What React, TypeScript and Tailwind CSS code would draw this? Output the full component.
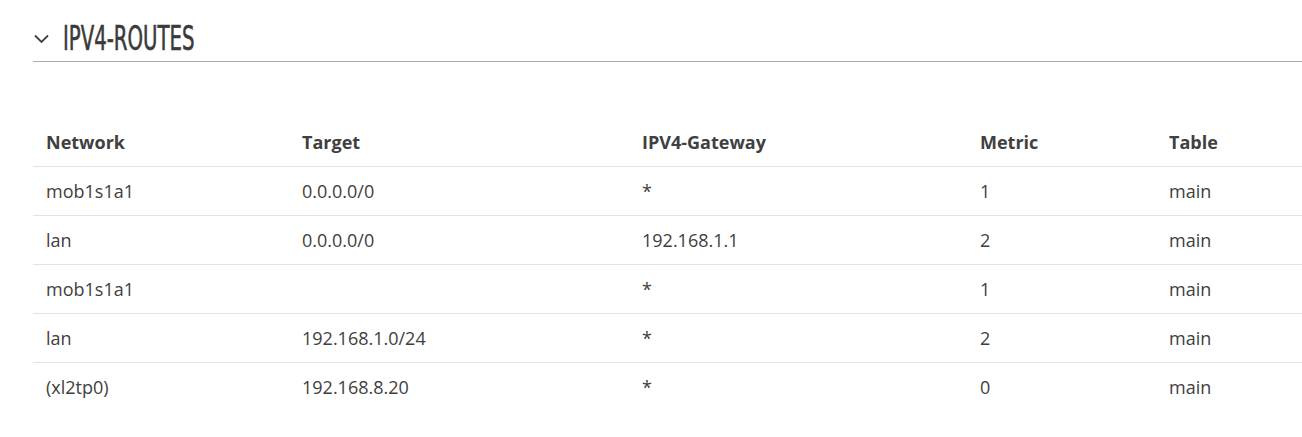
import React from 'react';

const rows = [
  { network: 'mob1s1a1', target: '0.0.0.0/0', gateway: '*', metric: '1', table: 'main' },
  { network: 'lan', target: '0.0.0.0/0', gateway: '192.168.1.1', metric: '2', table: 'main' },
  { network: 'mob1s1a1', target: '', gateway: '*', metric: '1', table: 'main' },
  { network: 'lan', target: '192.168.1.0/24', gateway: '*', metric: '2', table: 'main' },
  { network: '(xl2tp0)', target: '192.168.8.20', gateway: '*', metric: '0', table: 'main' },
];

const cols = ['w-[256px]', 'w-[340px]', 'w-[338px]', 'w-[189px]', 'w-[146px]'];

const App: React.FC = () => {
  return (
    <div className="w-[1302px] h-[437px] bg-white pl-[33px] text-[#404040]" style={{ fontFamily: '"Open Sans", sans-serif' }}>
      <div className="flex items-center h-[62px] border-b border-[#aaaaaa] pt-[14px]">
        <svg width="15" height="10" viewBox="0 0 15 10" className="ml-[1px] mr-[14px] mt-[2px]">
          <polyline points="1,1.5 7.5,8 14,1.5" fill="none" stroke="#404040" strokeWidth="1.8" />
        </svg>
        <h2
          className="text-[34px] leading-[40px] uppercase text-[#3a3a3a] scale-x-[0.645] origin-left [-webkit-text-stroke:0.6px_#3a3a3a]"
          style={{ fontFamily: '"Liberation Sans Narrow", "DejaVu Sans Condensed", "Roboto", sans-serif' }}
        >
          IPV4-Routes
        </h2>
      </div>

      <table className="mt-[54px] border-collapse table-fixed w-[1269px] text-[18px]">
        <thead>
          <tr className="h-[50px] border-b border-[#e2e2e2]">
            {['Network', 'Target', 'IPV4-Gateway', 'Metric', 'Table'].map((h, i) => (
              <th key={h} className={`${cols[i]} text-left font-bold px-[13px] pt-[3px]`}>
                {h}
              </th>
            ))}
          </tr>
        </thead>
        <tbody>
          {rows.map((r, index) => (
            <tr key={index} className={`h-[49px] ${index < rows.length - 1 ? 'border-b border-[#e2e2e2]' : ''}`}>
              <td className="px-[13px] pt-[2px]">{r.network}</td>
              <td className="px-[13px] pt-[2px]">{r.target}</td>
              <td className="px-[13px] pt-[2px]">{r.gateway}</td>
              <td className="px-[13px] pt-[2px]">{r.metric}</td>
              <td className="px-[13px] pt-[2px]">{r.table}</td>
            </tr>
          ))}
        </tbody>
      </table>
    </div>
  );
};

export default App;
